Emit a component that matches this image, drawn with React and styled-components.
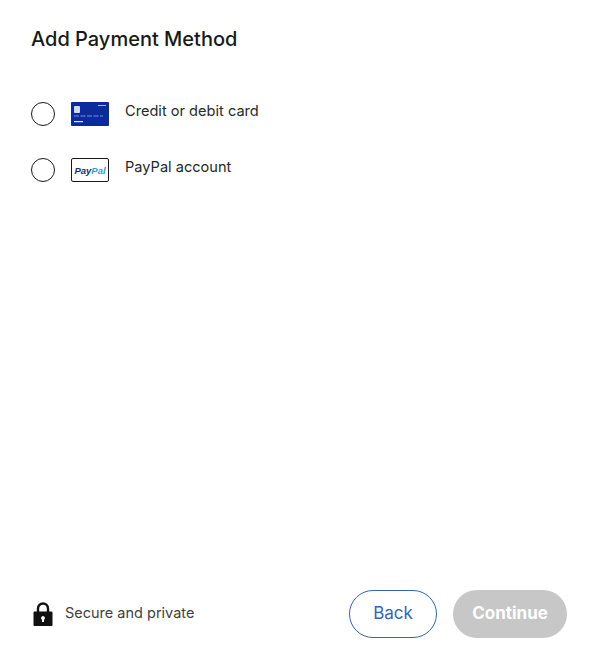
import * as React from "react";
import styled, { createGlobalStyle } from "styled-components";

const GlobalStyle = createGlobalStyle`
  html, body {
    margin: 0;
    padding: 0;
    background: #fff;
    font-family: Inter, "Liberation Sans", sans-serif;
  }
`;
const Page = styled.div`
  box-sizing: border-box;
  display: flex;
  flex-direction: column;
  height: 661px;
  padding: 24px 27px 23px 31px;
  overflow: hidden;
`;
const Title = styled.h1`
  margin: 0 0 48px;
  font-size: 20px;
  line-height: 30px;
  font-weight: 500;
  color: #191919;
`;
const MethodList = styled.div`
  display: flex;
  flex-direction: column;
  gap: 32px;
`;
const Method = styled.label`
  display: flex;
  align-items: flex-start;
  height: 24px;
  cursor: pointer;
`;
const Radio = styled.span`
  box-sizing: border-box;
  width: 24px;
  height: 24px;
  border: 1.5px solid #191919;
  border-radius: 50%;
  background: #fff;
  margin-right: 16px;
`;
const Logo = styled.span`
  display: block;
  width: 38px;
  height: 24px;
  margin-right: 16px;
`;
const MethodLabel = styled.span`
  font-size: 14.6px;
  line-height: 18px;
  color: #292929;
`;
const Footer = styled.div`
  display: flex;
  align-items: center;
  margin-top: auto;
`;
const Secure = styled.div`
  display: flex;
  align-items: center;
  flex: 1;
`;
const SecureText = styled.span`
  margin-bottom: 3px;
  font-size: 14.5px;
  color: #41413f;
`;
const LockIcon = styled.svg`
  width: 20px;
  height: 24px;
  margin: 0 12px 0 2px;
`;
const Button = styled.button`
  box-sizing: border-box;
  width: ${(p) => p.$width}px;
  height: 48px;
  margin-left: 16px;
  padding: 0 0 2px;
  border-radius: 24px;
  border: ${(p) => (p.$primary ? "none" : "1px solid #3665b3")};
  background: ${(p) => (p.$primary ? "#c7c7c7" : "#fff")};
  color: ${(p) => (p.$primary ? "#fff" : "#3665b3")};
  font-family: inherit;
  font-size: 17px;
  font-weight: ${(p) => (p.$primary ? 700 : 400)};
`;

const CardLogo = () => (
  <Logo>
    <svg width="38" height="24" viewBox="0 0 38 24">
      <rect width="38" height="24" rx="1" fill="#0d2a9c" />
      <rect x="3" y="4" width="6" height="7" rx="1" fill="#cfd8f2" />
      <rect x="27" y="3" width="8" height="1" fill="#aab8e8" />
      <path
        d="M3 14h5M9.5 14h5M16 14h5M22.500 14h5M29 14h3"
        stroke="#7d92dc"
        strokeWidth="1"
      />
      <rect x="3" y="19" width="9" height="1.200" fill="#dfe5f7" />
    </svg>
  </Logo>
);

const PayPalLogo = () => (
  <Logo>
    <svg width="38" height="24" viewBox="0 0 38 24">
      <rect x="0.5" y="0.5" width="37" height="23" rx="1.500" fill="#fff" stroke="#191919" />
      <text
        x="19"
        y="15.500"
        textAnchor="middle"
        fontFamily="'Liberation Sans', sans-serif"
        fontSize="9.500"
        fontWeight="700"
        fontStyle="italic"
      >
        <tspan fill="#12306f">Pay</tspan>
        <tspan fill="#2b9fdc">Pal</tspan>
      </text>
    </svg>
  </Logo>
);

export default function App() {
  return (
    <Page>
      <GlobalStyle />
      <Title>Add Payment Method</Title>
      <MethodList>
        <Method>
          <Radio />
          <CardLogo />
          <MethodLabel>Credit or debit card</MethodLabel>
        </Method>
        <Method>
          <Radio />
          <PayPalLogo />
          <MethodLabel>PayPal account</MethodLabel>
        </Method>
      </MethodList>
      <Footer>
        <Secure>
          <LockIcon viewBox="0 0 20 24">
            <path
              d="M5 11V6.500a5 5 0 0 1 10 0V11"
              fill="none"
              stroke="#111"
              strokeWidth="2.400"
            />
            <path
              fillRule="evenodd"
              fill="#111"
              d="M1.500 9.500h17a1 1 0 0 1 1 1V23a1 1 0 0 1-1 1h-17a1 1 0 0 1-1-1V10.500a1 1 0 0 1 1-1zM10 14a2 2 0 0 0-1 3.700V20h2v-2.300A2 2 0 0 0 10 14z"
            />
          </LockIcon>
          <SecureText>Secure and private</SecureText>
        </Secure>
        <Button $width={88}>Back</Button>
        <Button $width={114} $primary>
          Continue
        </Button>
      </Footer>
    </Page>
  );
}
